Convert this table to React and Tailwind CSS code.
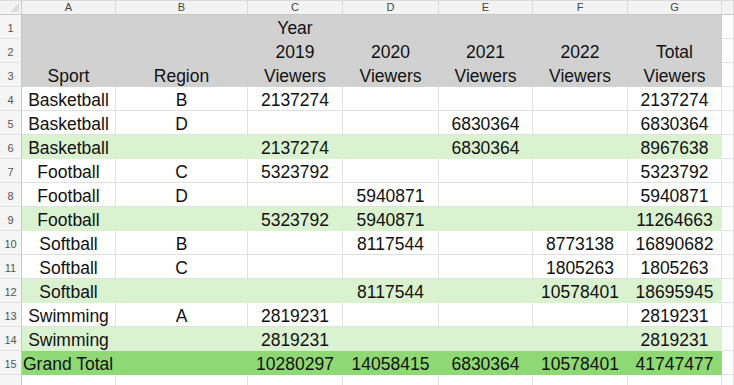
import React from "react";

const COLS = ["A", "B", "C", "D", "E", "F", "G", ""];

const rows = [
  { type: "head", cells: ["", "", "Year", "", "", "", ""] },
  { type: "head", cells: ["", "", "2019", "2020", "2021", "2022", "Total"] },
  { type: "head", cells: ["Sport", "Region", "Viewers", "Viewers", "Viewers", "Viewers", "Viewers"] },
  { type: "w", cells: ["Basketball", "B", "2137274", "", "", "", "2137274"] },
  { type: "w", cells: ["Basketball", "D", "", "", "6830364", "", "6830364"] },
  { type: "g", cells: ["Basketball", "", "2137274", "", "6830364", "", "8967638"] },
  { type: "w", cells: ["Football", "C", "5323792", "", "", "", "5323792"] },
  { type: "w", cells: ["Football", "D", "", "5940871", "", "", "5940871"] },
  { type: "g", cells: ["Football", "", "5323792", "5940871", "", "", "11264663"] },
  { type: "w", cells: ["Softball", "B", "", "8117544", "", "8773138", "16890682"] },
  { type: "w", cells: ["Softball", "C", "", "", "", "1805263", "1805263"] },
  { type: "g", cells: ["Softball", "", "", "8117544", "", "10578401", "18695945"] },
  { type: "w", cells: ["Swimming", "A", "2819231", "", "", "", "2819231"] },
  { type: "g", cells: ["Swimming", "", "2819231", "", "", "", "2819231"] },
  { type: "t", cells: ["Grand Total", "", "10280297", "14058415", "6830364", "10578401", "41747477"] },
];

const fillClass = {
  head: "bg-[#d1d1d1] border-[#d1d1d1]",
  w: "bg-white border-[#e1e1e1]",
  g: "bg-[#daf2d0] border-[#daf2d0]",
  t: "bg-[#8ed973] border-[#8ed973]",
};

function RowNum({ n }) {
  return (
    <div className="h-6 bg-[#f5f5f5] border-b border-r border-b-[#e1e1e1] border-r-[#c8c8c8] flex items-center justify-center text-[11px] text-[#555] pt-[3px]">
      {n}
    </div>
  );
}

export default function App() {
  return (
    <div
      className="w-[734px] h-[385px] overflow-hidden bg-white text-[#111]"
      style={{ fontFamily: '"Liberation Sans", Arial, sans-serif' }}
    >
      <div className="grid grid-cols-[22px_94px_132px_95px_96px_94px_95px_94px_1fr]">
        {/* column header row */}
        <div className="h-[15px] bg-[#f3f3f3] border-b border-r border-b-[#c6c6c6] border-r-[#c8c8c8] border-t border-t-[#dcdcdc] relative">
          <div className="absolute right-[2px] bottom-[2px] w-0 h-0 border-l-[9px] border-l-transparent border-b-[9px] border-b-[#dcdcdc]" />
        </div>
        {COLS.map((c, i) => (
          <div
            key={i}
            className="h-[15px] bg-[#f3f3f3] border-b border-r border-b-[#c6c6c6] border-r-[#dadada] border-t border-t-[#dcdcdc] flex items-center justify-center text-[11px] leading-none text-[#444]"
          >
            {c}
          </div>
        ))}

        {rows.map((r, ri) => (
          <React.Fragment key={ri}>
            <RowNum n={ri + 1} />
            {r.type === "t" ? (
              <>
                <div className={`col-span-2 h-6 border-b border-r ${fillClass.t} flex items-center justify-start pl-[1px] pt-[4px] text-[17.5px] leading-none`}>
                  Grand Total
                </div>
                {r.cells.slice(2).map((v, ci) => (
                  <div key={ci} className={`h-6 border-b border-r ${fillClass.t} flex items-center justify-center pt-[4px] text-[17.5px] leading-none`}>
                    {v}
                  </div>
                ))}
              </>
            ) : (
              r.cells.map((v, ci) => (
                <div
                  key={ci}
                  className={`h-6 border-b border-r ${fillClass[r.type]} flex items-center justify-center pt-[4px] text-[17.5px] leading-none`}
                >
                  {v}
                </div>
              ))
            )}
            <div className="h-6 bg-white border-b border-r border-[#e1e1e1]" />
          </React.Fragment>
        ))}

        {/* partial row 16 */}
        <div className="h-6 bg-[#f5f5f5] border-r border-r-[#c8c8c8]" />
        {COLS.map((c, i) => (
          <div key={i} className="h-6 bg-white border-r border-[#e1e1e1]" />
        ))}
      </div>
    </div>
  );
}
